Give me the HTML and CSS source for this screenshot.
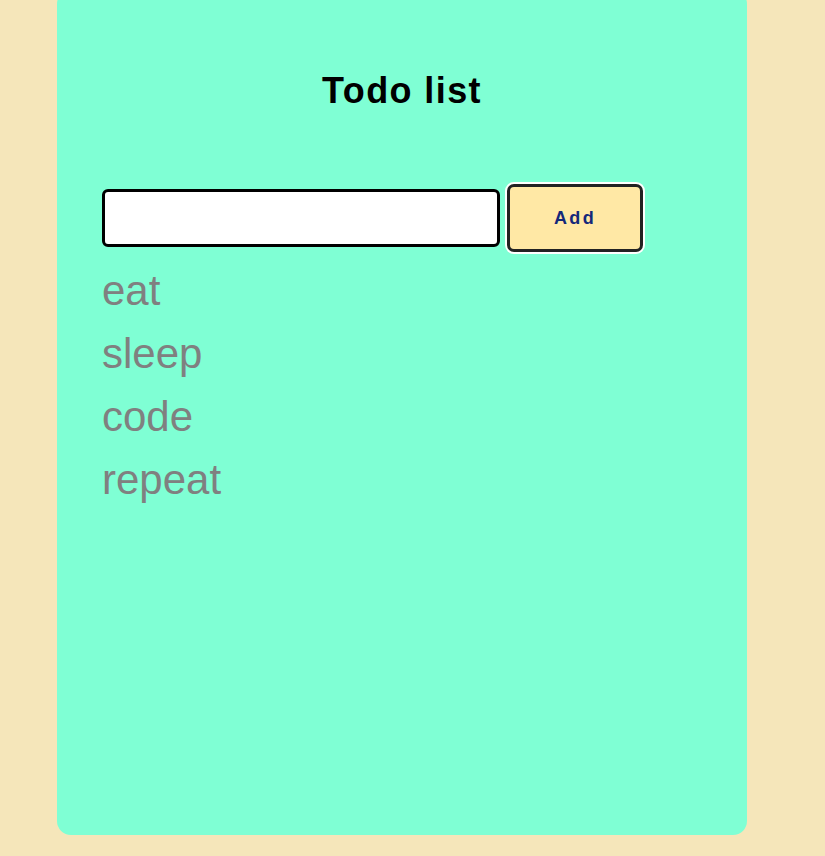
FILE: index.html
```html
<!DOCTYPE html>
<html>
<head>
<meta charset="utf-8">
<link rel="stylesheet" href="styles.css">
</head>
<body>
<div class="card">
  <h1 class="title">Todo list</h1>
  <form class="add-form">
    <input class="todo-input" type="text">
    <button class="add-btn" type="button">Add</button>
  </form>
  <ul class="todo-list">
    <li class="todo-item">eat</li>
    <li class="todo-item">sleep</li>
    <li class="todo-item">code</li>
    <li class="todo-item">repeat</li>
  </ul>
</div>
</body>
</html>
```
FILE: styles.css
```css
html, body {
  margin: 0;
  padding: 0;
}
body {
  background: #f5e6ba;
  font-family: "Liberation Sans", Arial, sans-serif;
  height: 856px;
  overflow: hidden;
}
.card {
  box-sizing: border-box;
  width: 690px;
  height: 845px;
  margin: -10px 0 0 57px;
  background: #7fffd4;
  border-radius: 14px;
  padding: 0 45px;
}
.title {
  margin: 0;
  padding-top: 81px;
  text-align: center;
  font-size: 36px;
  line-height: 40px;
  font-weight: bold;
  letter-spacing: 1.4px;
  color: #000;
}
.add-form {
  display: flex;
  align-items: center;
  gap: 5px;
  margin-top: 73px;
}
.todo-input {
  box-sizing: border-box;
  width: 398px;
  height: 58px;
  border: 3px solid #000;
  border-radius: 6px;
  background: #fff;
  margin: 0;
  padding: 0 8px;
}
.add-btn {
  box-sizing: border-box;
  width: 136px;
  height: 68px;
  margin: 0 1px 0 2px;
  background: #ffe8a5;
  border: 3px solid #222;
  border-radius: 7px;
  box-shadow: 0 0 0 2px #fff;
  font-family: "Liberation Sans", Arial, sans-serif;
  font-weight: bold;
  font-size: 18px;
  letter-spacing: 2.4px;
  color: #14287a;
}
.todo-list {
  list-style: none;
  margin: 7px 0 0;
  padding: 0;
}
.todo-item {
  font-size: 42px;
  line-height: 63px;
  color: #808080;
}
```
